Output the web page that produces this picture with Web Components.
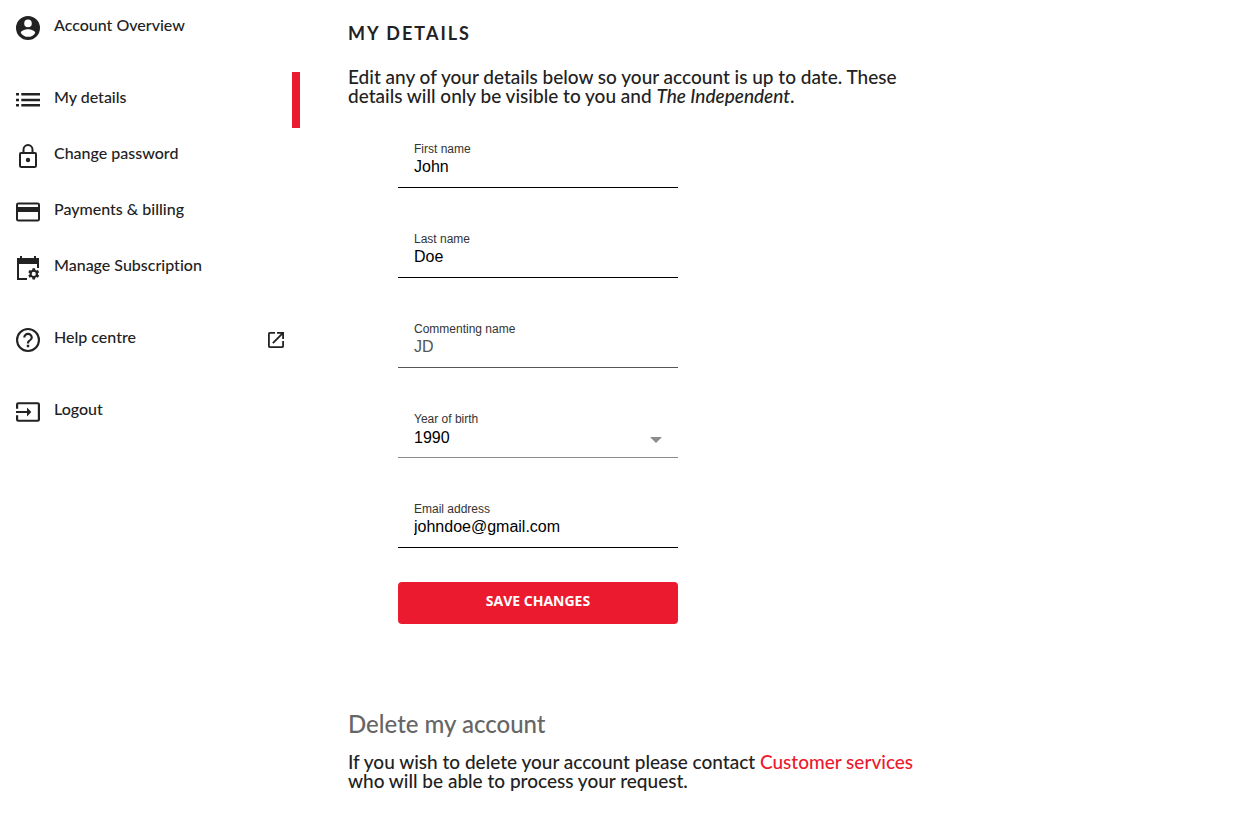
<!DOCTYPE html>
<html lang="en">
<head>
<meta charset="utf-8">
<meta name="viewport" content="width=device-width, initial-scale=1">
<title>My details</title>
<style>
  body {
    margin: 0;
    background: #fff;
    color: #222;
    font-family: Lato, "Open Sans", sans-serif;
    font-weight: 500;
    font-variant-ligatures: none;
    --brand: #ec1a2e;
    --ui-font: "Liberation Sans", Arial, sans-serif;
  }
</style>
</head>
<body>
<account-page></account-page>

<script>
const define = (name, html, init) => {
  const template = document.createElement('template');
  template.innerHTML = html;
  customElements.define(name, class extends HTMLElement {
    constructor() {
      super();
      this.attachShadow({ mode: 'open' }).append(template.content.cloneNode(true));
    }
    connectedCallback() {
      if (init) init(this, this.shadowRoot);
    }
    static get observedAttributes() { return ['name']; }
    attributeChangedCallback() {
      if (init && this.isConnected) init(this, this.shadowRoot);
    }
  });
};

const icons = {
  account: '<path fill-rule="evenodd" d="M12 0a12 12 0 1 0 0 24 12 12 0 0 0 0-24zm0 3.6a3.8 3.8 0 1 1 0 7.600 3.800 3.800 0 0 1 0-7.600zm0 17.200c-3 0-5.700-1.500-7.200-3.900 0-2.400 4.800-3.700 7.200-3.700s7.200 1.300 7.200 3.700A8.500 8.500 0 0 1 12 20.800z"/>',
  list: '<path d="M0 5h3v2.600H0zM5.300 5H24v2.600H5.300zM0 10.700h3v2.600H0zM5.300 10.700H24v2.600H5.300zM0 16h3v2.600H0zM5.300 16H24v2.600H5.300z"/>',
  lock: '<path fill-rule="evenodd" d="M19 8h-1.500V5.600a5.500 5.500 0 0 0-11 0V8H5a2.100 2.100 0 0 0-2 2.200v11.600A2.100 2.100 0 0 0 5 24h14a2.100 2.100 0 0 0 2-2.200V10.200A2.100 2.100 0 0 0 19 8zM8.500 5.600a3.500 3.500 0 0 1 7 0V8h-7zM19 22H5V10h14zm-7-3.800a2.200 2.200 0 1 0 0-4.400 2.200 2.200 0 0 0 0 4.400z"/>',
  card: '<path fill-rule="evenodd" d="M21.600 2.400H2.400A2.400 2.400 0 0 0 0 4.800v14.400a2.400 2.400 0 0 0 2.400 2.400h19.200a2.400 2.400 0 0 0 2.400-2.400V4.800a2.400 2.400 0 0 0-2.400-2.400zM22 19.600H2V12h20zM22 7H2V4.400h20z"/>',
  manage: '<path d="M1 2h3V0h2v2h12V0h2v2h3v10h-2V8H3v14h8v2H1z"/><path fill-rule="evenodd" d="m21.900 18.500 1.300 1-1.300 2.200-1.500-.6-1.100.7-.3 1.700h-2.500l-.3-1.700-1.100-.7-1.500.6-1.300-2.200 1.300-1v-1.300l-1.300-1 1.300-2.200 1.500.6 1.100-.7.300-1.600H19l.3 1.600 1.100.7 1.500-.6 1.300 2.200-1.300 1zM17.750 15.800a2.100 2.100 0 1 0 0 4.200 2.100 2.100 0 0 0 0-4.200z"/>',
  help: '<path d="M10.800 19.200h2.400v-2.400h-2.400zM12 0a12 12 0 1 0 0 24 12 12 0 0 0 0-24zm0 21.900a9.900 9.900 0 1 1 0-19.800 9.900 9.900 0 0 1 0 19.800zM12 4.800a4.800 4.800 0 0 0-4.800 4.800h2.200a2.600 2.600 0 0 1 5.200 0c0 2.400-3.700 2.100-3.700 6h2.200c0-2.700 3.700-3 3.700-6A4.800 4.800 0 0 0 12 4.800z"/>',
  logout: '<path d="M21.800 2.200H2.200A2.200 2.200 0 0 0 0 4.400v4.300h2.200V4.300h19.600v15.400H2.200v-4.400H0v4.400a2.200 2.200 0 0 0 2.200 2.100h19.600a2.200 2.200 0 0 0 2.200-2.100V4.400a2.200 2.200 0 0 0-2.200-2.200zM11 16.400l4.300-4.400L11 7.600v3.300H0v2.200h11z"/>',
  external: '<path d="M18.200 18.200H5.800V5.800H11V4H5.800A1.800 1.800 0 0 0 4 5.800v12.400A1.800 1.800 0 0 0 5.800 20h12.400a1.800 1.800 0 0 0 1.800-1.800V13h-1.800zM13 4v1.800h3.900l-8.700 8.700 1.300 1.300 8.700-8.700V11H20V4z"/>'
};

define('ui-icon', `
  <style>
    :host { display: block; width: 24px; height: 24px; flex: none; }
    svg { display: block; width: 100%; height: 100%; fill: currentColor; }
  </style>
  <svg viewBox="0 0 24 24" aria-hidden="true"></svg>`,
  (el, root) => { root.querySelector('svg').innerHTML = icons[el.getAttribute('name')] || ''; });

define('nav-item', `
  <style>
    :host { display: block; }
    a {
      box-sizing: border-box; display: flex; align-items: center; gap: 14px;
      height: 56px; padding: 0 12px 0 16px;
      color: inherit; text-decoration: none;
      font-size: 16px; line-height: 20px;
    }
    span { flex: 1; padding-bottom: 6px; }
    :host([active]) a { border-right: 8px solid var(--brand); }
  </style>
  <a href="#"><ui-icon></ui-icon><span><slot></slot></span><slot name="end"></slot></a>`,
  (el, root) => { root.querySelector('ui-icon').setAttribute('name', el.getAttribute('icon')); });

define('nav-group', `
  <style>:host { display: flex; flex-direction: column; }</style>
  <slot></slot>`);

define('side-nav', `
  <style>
    :host { display: block; }
    nav { display: flex; flex-direction: column; gap: 16px; }
  </style>
  <nav aria-label="Account">
    <nav-group><nav-item icon="account">Account Overview</nav-item></nav-group>
    <nav-group>
      <nav-item icon="list" active>My details</nav-item>
      <nav-item icon="lock">Change password</nav-item>
      <nav-item icon="card">Payments &amp; billing</nav-item>
      <nav-item icon="manage">Manage Subscription</nav-item>
    </nav-group>
    <nav-group><nav-item icon="help">Help centre<ui-icon slot="end" name="external"></ui-icon></nav-item></nav-group>
    <nav-group><nav-item icon="logout">Logout</nav-item></nav-group>
  </nav>`);

const fieldStyle = `
  :host { display: block; font-family: var(--ui-font); font-weight: 400; }
  .field {
    box-sizing: border-box; display: flex; flex-direction: column;
    height: 56px; padding: 9px 16px 0; border-bottom: 1px solid #000;
  }
  label { font-size: 12px; line-height: 16px; color: #333; }
  input, select {
    width: 100%; height: 20px; margin: 0; padding: 0; border: 0; outline: 0;
    background: none; color: #000; font: 16px/20px var(--ui-font);
  }`;

define('text-field', `
  <style>${fieldStyle}
    :host([disabled]) .field { border-color: #555; }
    input:disabled { color: #555; }
  </style>
  <div class="field"><label for="control"></label><input id="control"></div>`,
  (el, root) => {
    const input = root.querySelector('input');
    root.querySelector('label').textContent = el.getAttribute('label');
    input.type = el.getAttribute('type') || 'text';
    input.value = el.getAttribute('value');
    input.disabled = el.hasAttribute('disabled');
  });

define('select-field', `
  <style>${fieldStyle}
    .field { border-color: #8c8c8c; }
    .control { display: grid; align-items: center; padding-top: 1px; }
    .control > * { grid-area: 1 / 1; }
    select { appearance: none; }
    svg { justify-self: end; width: 12px; height: 6px; margin-top: 4px; fill: #8c8c8c; pointer-events: none; }
  </style>
  <div class="field">
    <label for="control"></label>
    <div class="control">
      <select id="control"></select>
      <svg viewBox="0 0 12 6" aria-hidden="true"><path d="M0 0h12L6 6z"/></svg>
    </div>
  </div>`,
  (el, root) => {
    root.querySelector('label').textContent = el.getAttribute('label');
    root.querySelector('select').replaceChildren(new Option(el.getAttribute('value')));
  });

define('details-form', `
  <style>
    :host { display: block; max-width: 280px; }
    form { display: flex; flex-direction: column; gap: 34px; }
    button {
      height: 42px; padding: 0 16px 4px; border: 0; border-radius: 4px;
      background: var(--brand); color: #fff; cursor: pointer;
      font: bold 14px/20px "Open Sans", sans-serif;
    }
  </style>
  <form>
    <text-field label="First name" value="John"></text-field>
    <text-field label="Last name" value="Doe"></text-field>
    <text-field label="Commenting name" value="JD" disabled></text-field>
    <select-field label="Year of birth" value="1990"></select-field>
    <text-field label="Email address" type="email" value="johndoe@gmail.com"></text-field>
    <button type="button">SAVE CHANGES</button>
  </form>`);

define('account-page', `
  <style>
    :host { display: grid; grid-template-columns: 300px minmax(0, 1fr); }
    main { padding: 22px 48px 24px; }
    h1 { margin: 0; font-size: 18px; line-height: 22px; letter-spacing: 2px; }
    p { margin: 0; max-width: 600px; font-size: 19px; line-height: 19px; }
    h1 + p { margin-top: 23px; }
    details-form { margin: 27px 0 84px 50px; }
    h2 { margin: 0 0 12px; font-size: 24px; line-height: 32px; font-weight: 500; color: #666; }
    a { color: var(--brand); text-decoration: none; }
  </style>
  <side-nav></side-nav>
  <main>
    <h1>MY DETAILS</h1>
    <p>Edit any of your details below so your account is up to date. These details will only be visible to you and <em>The Independent</em>.</p>
    <details-form></details-form>
    <h2>Delete my account</h2>
    <p>If you wish to delete your account please contact <a href="#">Customer services</a> who will be able to process your request.</p>
  </main>`);
</script>
</body>
</html>
